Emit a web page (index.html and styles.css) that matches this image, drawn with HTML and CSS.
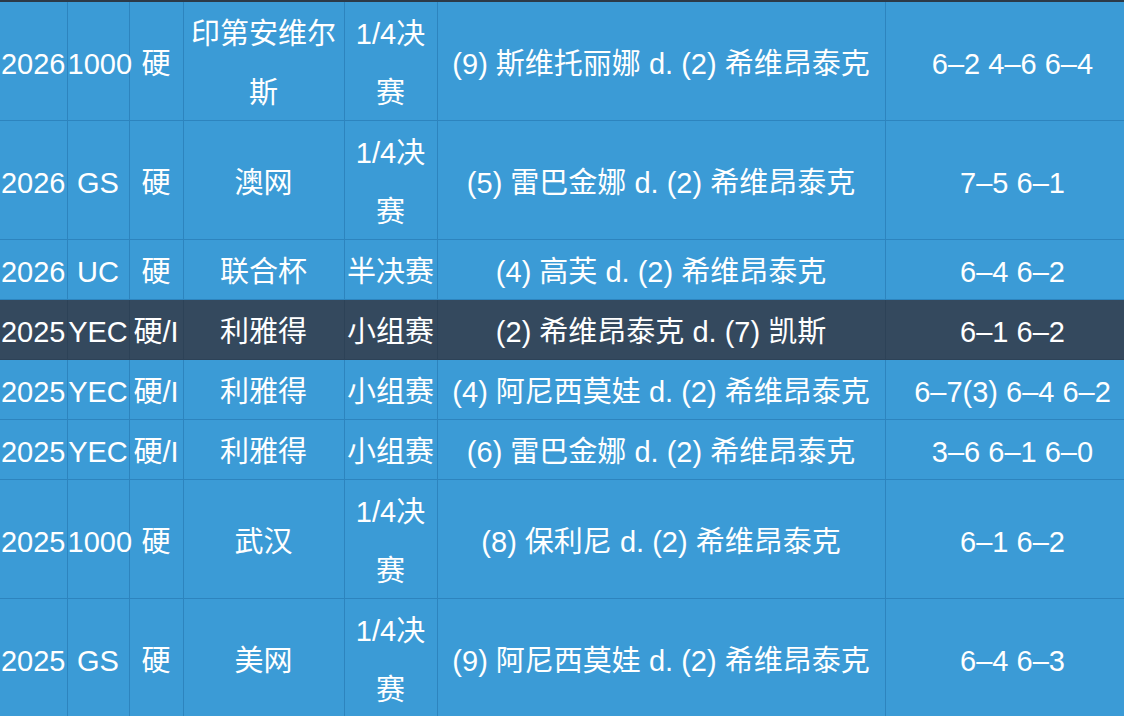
FILE: index.html
```html
<!DOCTYPE html>
<html lang="zh">
<head>
<meta charset="utf-8">
<link rel="stylesheet" href="styles.css">
</head>
<body>
<div class="page">
  <div class="topbar"></div>
  <table class="results">
    <colgroup>
      <col class="c-year"><col class="c-level"><col class="c-surface"><col class="c-event"><col class="c-round"><col class="c-match"><col class="c-score">
    </colgroup>
    <tbody>
      <tr>
        <td><span class="t">2026</span></td><td><span class="t">1000</span></td><td><span class="t">硬</span></td><td><span class="t">印第安维尔斯</span></td><td><span class="t">1/4决赛</span></td><td><span class="t">(9) 斯维托丽娜 d. (2) 希维昂泰克</span></td><td><span class="t">6–2 4–6 6–4</span></td>
      </tr>
      <tr>
        <td><span class="t">2026</span></td><td><span class="t">GS</span></td><td><span class="t">硬</span></td><td><span class="t">澳网</span></td><td><span class="t">1/4决赛</span></td><td><span class="t">(5) 雷巴金娜 d. (2) 希维昂泰克</span></td><td><span class="t">7–5 6–1</span></td>
      </tr>
      <tr>
        <td><span class="t">2026</span></td><td><span class="t">UC</span></td><td><span class="t">硬</span></td><td><span class="t">联合杯</span></td><td><span class="t">半决赛</span></td><td><span class="t">(4) 高芙 d. (2) 希维昂泰克</span></td><td><span class="t">6–4 6–2</span></td>
      </tr>
      <tr class="active">
        <td><span class="t">2025</span></td><td><span class="t">YEC</span></td><td><span class="t">硬/I</span></td><td><span class="t">利雅得</span></td><td><span class="t">小组赛</span></td><td><span class="t">(2) 希维昂泰克 d. (7) 凯斯</span></td><td><span class="t">6–1 6–2</span></td>
      </tr>
      <tr>
        <td><span class="t">2025</span></td><td><span class="t">YEC</span></td><td><span class="t">硬/I</span></td><td><span class="t">利雅得</span></td><td><span class="t">小组赛</span></td><td><span class="t">(4) 阿尼西莫娃 d. (2) 希维昂泰克</span></td><td><span class="t">6–7(3) 6–4 6–2</span></td>
      </tr>
      <tr>
        <td><span class="t">2025</span></td><td><span class="t">YEC</span></td><td><span class="t">硬/I</span></td><td><span class="t">利雅得</span></td><td><span class="t">小组赛</span></td><td><span class="t">(6) 雷巴金娜 d. (2) 希维昂泰克</span></td><td><span class="t">3–6 6–1 6–0</span></td>
      </tr>
      <tr>
        <td><span class="t">2025</span></td><td><span class="t">1000</span></td><td><span class="t">硬</span></td><td><span class="t">武汉</span></td><td><span class="t">1/4决赛</span></td><td><span class="t">(8) 保利尼 d. (2) 希维昂泰克</span></td><td><span class="t">6–1 6–2</span></td>
      </tr>
      <tr>
        <td><span class="t">2025</span></td><td><span class="t">GS</span></td><td><span class="t">硬</span></td><td><span class="t">美网</span></td><td><span class="t">1/4决赛</span></td><td><span class="t">(9) 阿尼西莫娃 d. (2) 希维昂泰克</span></td><td><span class="t">6–4 6–3</span></td>
      </tr>
    </tbody>
  </table>
</div>
</body>
</html>
```

FILE: styles.css
```css
html, body {
  margin: 0;
  padding: 0;
  background: #3b9bd6;
  overflow: hidden;
}

.page {
  width: 1124px;
  height: 716px;
  overflow: hidden;
  background: #3b9bd6;
}

.topbar {
  height: 2px;
  background: #2c3a48;
}

.results {
  width: 1140px;
  table-layout: fixed;
  border-collapse: collapse;
  font-family: "Liberation Sans", "Noto Sans CJK SC", sans-serif;
  font-size: 29px;
  line-height: 59px;
  color: #ffffff;
}

.c-year { width: 67px; }
.c-level { width: 62px; }
.c-surface { width: 54px; }
.c-event { width: 161px; }
.c-round { width: 93px; }
.c-match { width: 448px; }
.c-score { width: 255px; }

.results td {
  padding: 0;
  text-align: center;
  vertical-align: middle;
  border: 1px solid #2d84be;
  white-space: normal;
  overflow: visible;
}

.results .t {
  line-height: 32px;
  vertical-align: -3px;
}

.results tr:first-child td {
  border-top: none;
}

.results td:first-child {
  border-left: none;
}

.results tr.active td {
  background: #34495e;
  border-color: #2d4257;
}
```
